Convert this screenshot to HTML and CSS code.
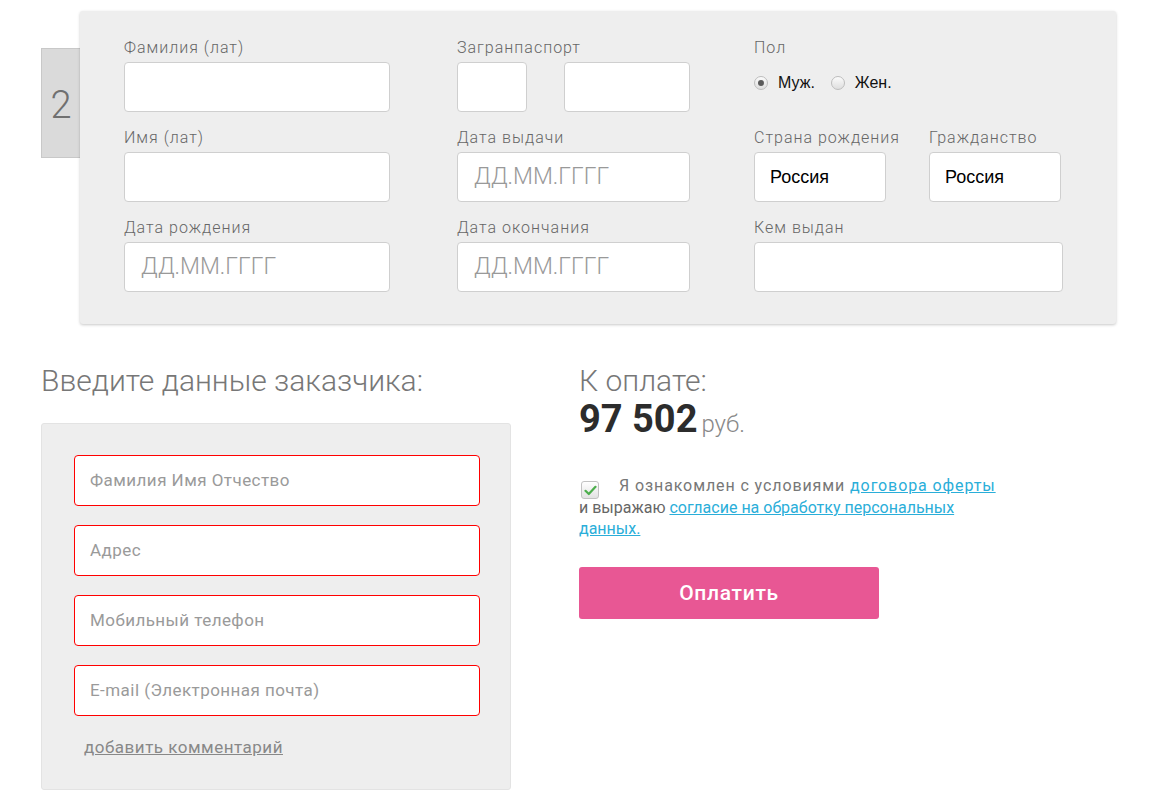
FILE: index.html
```html
<!DOCTYPE html>
<html lang="ru">
<head>
<meta charset="utf-8">
<title>Оформление заказа</title>
<link rel="stylesheet" href="styles.css">
</head>
<body>
<div class="page">
  <section class="passenger">
    <div class="passenger-num">2</div>
    <div class="passenger-card">
      <div class="col col-1">
        <div class="field">
          <label class="lbl">Фамилия (лат)</label>
          <div class="inp"></div>
        </div>
        <div class="field">
          <label class="lbl">Имя (лат)</label>
          <div class="inp"></div>
        </div>
        <div class="field">
          <label class="lbl">Дата рождения</label>
          <div class="inp date">ДД.ММ.ГГГГ</div>
        </div>
      </div>
      <div class="col col-2">
        <div class="field">
          <label class="lbl">Загранпаспорт</label>
          <div class="pair">
            <div class="inp series"></div>
            <div class="inp number"></div>
          </div>
        </div>
        <div class="field">
          <label class="lbl">Дата выдачи</label>
          <div class="inp date">ДД.ММ.ГГГГ</div>
        </div>
        <div class="field">
          <label class="lbl">Дата окончания</label>
          <div class="inp date">ДД.ММ.ГГГГ</div>
        </div>
      </div>
      <div class="col col-3">
        <div class="field">
          <label class="lbl">Пол</label>
          <div class="radios">
            <span class="radio checked"></span><span class="radio-txt">Муж.</span>
            <span class="radio"></span><span class="radio-txt">Жен.</span>
          </div>
        </div>
        <div class="field">
          <div class="pair country">
            <div>
              <label class="lbl">Страна рождения</label>
              <div class="inp value">Россия</div>
            </div>
            <div>
              <label class="lbl">Гражданство</label>
              <div class="inp value">Россия</div>
            </div>
          </div>
        </div>
        <div class="field">
          <label class="lbl">Кем выдан</label>
          <div class="inp issuer"></div>
        </div>
      </div>
    </div>
  </section>

  <section class="order">
    <div class="customer">
      <h2 class="title">Введите данные заказчика:</h2>
      <div class="customer-box">
        <div class="inp-req">Фамилия Имя Отчество</div>
        <div class="inp-req">Адрес</div>
        <div class="inp-req">Мобильный телефон</div>
        <div class="inp-req">E-mail (Электронная почта)</div>
        <a class="comment" href="#">добавить комментарий</a>
      </div>
    </div>
    <div class="payment">
      <h2 class="title">К оплате:</h2>
      <div class="sum"><span class="sum-num">97 502</span> <span class="sum-cur">руб.</span></div>
      <div class="agree">
        <p class="agree-first"><span class="check"><svg width="13" height="11" viewBox="0 0 13 11"><path d="M1.5 5.8 L4.8 9 L11.5 1.8" fill="none" stroke="#4cae4c" stroke-width="2.2" stroke-linecap="round" stroke-linejoin="round"/></svg></span>Я ознакомлен с условиями <a href="#">договора оферты</a></p>
        <p class="agree-rest">и выражаю <a href="#">согласие на обработку персональных данных.</a></p>
      </div>
      <button class="pay" type="button">Оплатить</button>
    </div>
  </section>
</div>
</body>
</html>
```

FILE: styles.css
```css
* {
  box-sizing: border-box;
}

body {
  margin: 0;
  background: #fff;
  font-family: Roboto, "Liberation Sans", sans-serif;
  color: #666;
}

.page {
  padding: 11px 0 0 41px;
  width: 1160px;
}

/* passenger block */
.passenger {
  display: flex;
  align-items: flex-start;
}

.passenger-num {
  margin-top: 37px;
  width: 39px;
  height: 110px;
  background: #dadada;
  border: 1px solid #c8c8c8;
  border-right: none;
  display: flex;
  align-items: center;
  justify-content: center;
  padding-top: 4px;
  font-size: 38px;
  font-weight: 300;
  color: #707070;
}

.passenger-card {
  width: 1036px;
  height: 313px;
  background: #eee;
  border-radius: 3px;
  box-shadow: 0 1px 3px rgba(0, 0, 0, 0.22);
  padding: 27px 0 0 44px;
  display: grid;
  grid-template-columns: 266px 233px 310px;
  column-gap: 67px;
}

.col-3 {
  margin-left: -3px;
}

.col {
  display: flex;
  flex-direction: column;
  gap: 16px;
}

.field {
  display: flex;
  flex-direction: column;
}

.lbl {
  display: block;
  font-size: 16px;
  font-weight: 300;
  line-height: 20px;
  height: 20px;
  margin-bottom: 4px;
  color: #666;
  letter-spacing: 1px;
  white-space: nowrap;
}

.inp {
  height: 50px;
  background: #fff;
  border: 1px solid #cfcfcf;
  border-radius: 4px;
}

.inp.date {
  padding-left: 16px;
  font-size: 23px;
  font-weight: 300;
  line-height: 48px;
  color: #999;
}

.inp.value {
  padding-left: 15px;
  font-family: "Liberation Sans", Arial, sans-serif;
  font-size: 18px;
  line-height: 48px;
  color: #000;
}

.inp.issuer {
  width: 309px;
}

.pair {
  display: flex;
  gap: 37px;
}

.inp.series {
  width: 70px;
}

.inp.number {
  width: 126px;
}

.pair.country {
  gap: 43px;
}

.pair.country > div {
  width: 132px;
}

.radios {
  height: 50px;
  display: flex;
  align-items: center;
  padding-bottom: 9px;
  font-family: "Liberation Sans", Arial, sans-serif;
  font-size: 16px;
  color: #111;
}

.radio {
  width: 14px;
  height: 14px;
  border-radius: 50%;
  border: 1px solid #bdbdbd;
  background: linear-gradient(#fbfbfb, #dedede);
  position: relative;
  margin-right: 10px;
}

.radio.checked::after {
  content: "";
  position: absolute;
  left: 3px;
  top: 3px;
  width: 6px;
  height: 6px;
  border-radius: 50%;
  background: #5a5a5a;
}

.radio-txt {
  margin-right: 16px;
}

/* customer + payment */
.order {
  display: flex;
  gap: 68px;
  margin-top: 42px;
}

.title {
  margin: 0;
  font-size: 30px;
  font-weight: 300;
  line-height: 30px;
  color: #777;
  white-space: nowrap;
}

.customer {
  width: 470px;
}

.customer .title {
  margin-bottom: 27px;
}

.customer-box {
  background: #eee;
  border: 1px solid #e3e3e3;
  border-radius: 3px;
  height: 367px;
  padding: 31px 0 0 32px;
  display: flex;
  flex-direction: column;
  gap: 19px;
}

.inp-req {
  width: 406px;
  height: 51px;
  background: #fff;
  border: 1px solid #f00;
  border-radius: 4px;
  padding-left: 15px;
  font-size: 17px;
  line-height: 49px;
  letter-spacing: 0.45px;
  color: #9a9a9a;
}

.comment {
  margin: 2px 0 0 10px;
  font-size: 17px;
  color: #888;
  text-decoration: underline;
  letter-spacing: 0.5px;
  line-height: 20px;
}

.payment {
  width: 440px;
}

.sum {
  margin-top: 3px;
  line-height: 40px;
  color: #333;
}

.sum-num {
  font-size: 38px;
  font-weight: 700;
  color: #2c2c2c;
}

.sum-cur {
  font-size: 24px;
  font-weight: 300;
  color: #888;
}

.agree {
  margin-top: 28px;
  width: 420px;
  font-size: 16px;
  color: #666;
}

.agree p {
  margin: 0;
}

.agree-first {
  height: 21px;
  line-height: 21px;
  margin-bottom: 1px !important;
  letter-spacing: 0.9px;
  color: #777;
  white-space: nowrap;
}

.agree-rest {
  line-height: 21px;
}

.check {
  display: inline-block;
  vertical-align: -4px;
  width: 18px;
  height: 18px;
  margin: 0 20px 0 2px;
  border: 1px solid #c2c2c2;
  border-radius: 3px;
  background: linear-gradient(#fff, #e2e2e2);
  text-align: center;
  line-height: 16px;
  letter-spacing: 0;
}

.check svg {
  vertical-align: middle;
}

.agree a {
  color: #2aaed9;
  text-decoration: underline;
}

.pay {
  display: block;
  margin-top: 28px;
  width: 300px;
  height: 52px;
  border: none;
  border-radius: 3px;
  background: #e85794;
  color: #fff;
  font-family: Roboto, "Liberation Sans", sans-serif;
  font-size: 21px;
  font-weight: 500;
  letter-spacing: 0.7px;
  cursor: pointer;
}
```
